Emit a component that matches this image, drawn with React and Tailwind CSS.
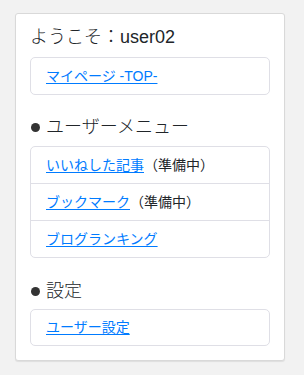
import React from 'react';

const jp = { fontFamily: '"Liberation Sans", "Noto Sans CJK JP", sans-serif' };

function SectionTitle({ children }) {
  return (
    <h3 className="flex items-center h-[22px] text-[18px] leading-[22px] text-[#212529] font-light">
      <span className="inline-block w-[9px] h-[9px] rounded-full bg-[#333] ml-[1px] mr-[6px]" />
      {children}
    </h3>
  );
}

function Item({ label, note, last }) {
  return (
    <li className={`flex items-center px-[15px] text-[14px] ${last ? 'h-[36px]' : 'h-[37px] border-b border-[#dfdfe6]'}`}>
      <a href="#" className="text-[#007bff] underline underline-offset-2">{label}</a>
      {note && <span className="text-[#212529]">{note}</span>}
    </li>
  );
}

export default function App() {
  return (
    <div className="w-[304px] h-[375px] bg-[#f2f2f2] pt-[13px] pl-[15px]" style={jp}>
      <div className="w-[270px] bg-white border border-[#d9d9d9] rounded-[3px] px-[14px] pt-[12px] pb-[14px] shadow-[0_1px_1px_rgba(0,0,0,0.08)]">
        <h2 className="h-[22px] text-[18px] leading-[22px] text-[#212529] font-light mb-[9px]">ようこそ：user02</h2>
        <div className="h-[38px] flex items-center px-[15px] border border-[#dfdfe6] rounded-[5px] text-[14px]">
          <a href="#" className="text-[#007bff] underline underline-offset-2">マイページ -TOP-</a>
        </div>

        <div className="mt-[21px] mb-[8px]">
          <SectionTitle>ユーザーメニュー</SectionTitle>
        </div>
        <ul className="border border-[#dfdfe6] rounded-[5px]">
          <Item label="いいねした記事" note="（準備中）" />
          <Item label="ブックマーク" note="（準備中）" />
          <Item label="ブログランキング" last />
        </ul>

        <div className="mt-[22px] mb-[7px]">
          <SectionTitle>設定</SectionTitle>
        </div>
        <div className="h-[37px] flex items-center px-[15px] border border-[#dfdfe6] rounded-[5px] text-[14px]">
          <a href="#" className="text-[#007bff] underline underline-offset-2">ユーザー設定</a>
        </div>
      </div>
    </div>
  );
}
